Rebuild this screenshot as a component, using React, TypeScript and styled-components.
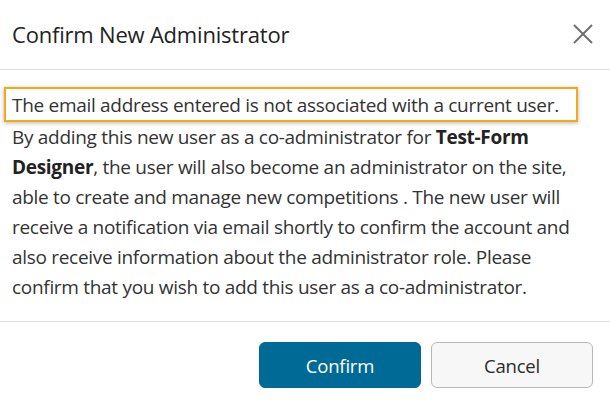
import React from "react";
import styled, { createGlobalStyle } from "styled-components";

const Global = createGlobalStyle`
  html, body { margin: 0; padding: 0; background: #ffffff; }
  body { font-family: "Open Sans", "Noto Sans", sans-serif; color: #262626; }
`;

const Dialog = styled.div`
  width: 610px;
  height: 406px;
  display: flex;
  flex-direction: column;
  background: #fff;
`;

const Header = styled.div`
  display: flex;
  align-items: center;
  justify-content: space-between;
  padding: 0 15px 2px 12px;
  border-bottom: 1px solid #dedede;
  box-sizing: border-box;
  height: 70px;
`;

const Title = styled.h1`
  margin: 0;
  font-size: 22px;
  font-weight: 400;
  color: #222;
  letter-spacing: -0.2px;
`;

const CloseButton = styled.button`
  border: 0;
  background: transparent;
  padding: 0;
  width: 24px;
  height: 24px;
  display: flex;
  align-items: center;
  justify-content: center;
  cursor: pointer;
`;

const Body = styled.div`
  padding: 17px 10px 0 4px;
  height: 252px;
  box-sizing: border-box;
  border-bottom: 1px solid #e2e2e2;
`;

const Highlight = styled.div`
  width: fit-content;
  border: 2px solid #f5a81c;
  box-shadow: 0 1px 4px rgba(0, 0, 0, 0.3);
  padding: 1px 17px 0 6px;
  line-height: 30px;
  height: 30px;
  font-size: 19px;
  letter-spacing: -0.3px;
  color: #333;
`;

const Paragraph = styled.p`
  margin: 0;
  padding-left: 8px;
  font-size: 19px;
  line-height: 30px;
  letter-spacing: -0.3px;
  color: #333;
  width: 588px;
  box-sizing: border-box;
`;

const Strong = styled.strong`
  font-weight: 700;
  color: #222;
`;

const Footer = styled.div`
  flex: 1;
  display: flex;
  justify-content: flex-end;
  align-items: flex-start;
  gap: 10px;
  padding: 20px 17px 0 0;
`;

const Button = styled.button<{ $primary?: boolean }>`
  width: 162px;
  height: 46px;
  border-radius: 6px;
  font-family: "Open Sans", "Noto Sans", sans-serif;
  font-size: 18.5px;
  letter-spacing: -0.2px;
  cursor: pointer;
  background: ${(p) => (p.$primary ? "#006a96" : "#f7f7f7")};
  color: ${(p) => (p.$primary ? "#ffffff" : "#2b2b2b")};
  border: 1px solid ${(p) => (p.$primary ? "#006a96" : "#b8b8b8")};
`;

export default function App() {
  return (
    <>
      <Global />
      <Dialog>
        <Header>
          <Title>Confirm New Administrator</Title>
          <CloseButton aria-label="Close">
            <svg width="22" height="22" viewBox="0 0 22 22">
              <path d="M2 2 L20 20 M20 2 L2 20" stroke="#707070" strokeWidth="2" fill="none" />
            </svg>
          </CloseButton>
        </Header>
        <Body>
          <Highlight>The email address entered is not associated with a current user.</Highlight>
          <Paragraph>
            By adding this new user as a co-administrator for <Strong>Test-Form Designer</Strong>, the user
            will also become an administrator on the site, able to create and manage new competitions . The
            new user will receive a notification via email shortly to confirm the account and also receive
            information about the administrator role. Please confirm that you wish to add this user as a
            co-administrator.
          </Paragraph>
        </Body>
        <Footer>
          <Button $primary>Confirm</Button>
          <Button>Cancel</Button>
        </Footer>
      </Dialog>
    </>
  );
}
